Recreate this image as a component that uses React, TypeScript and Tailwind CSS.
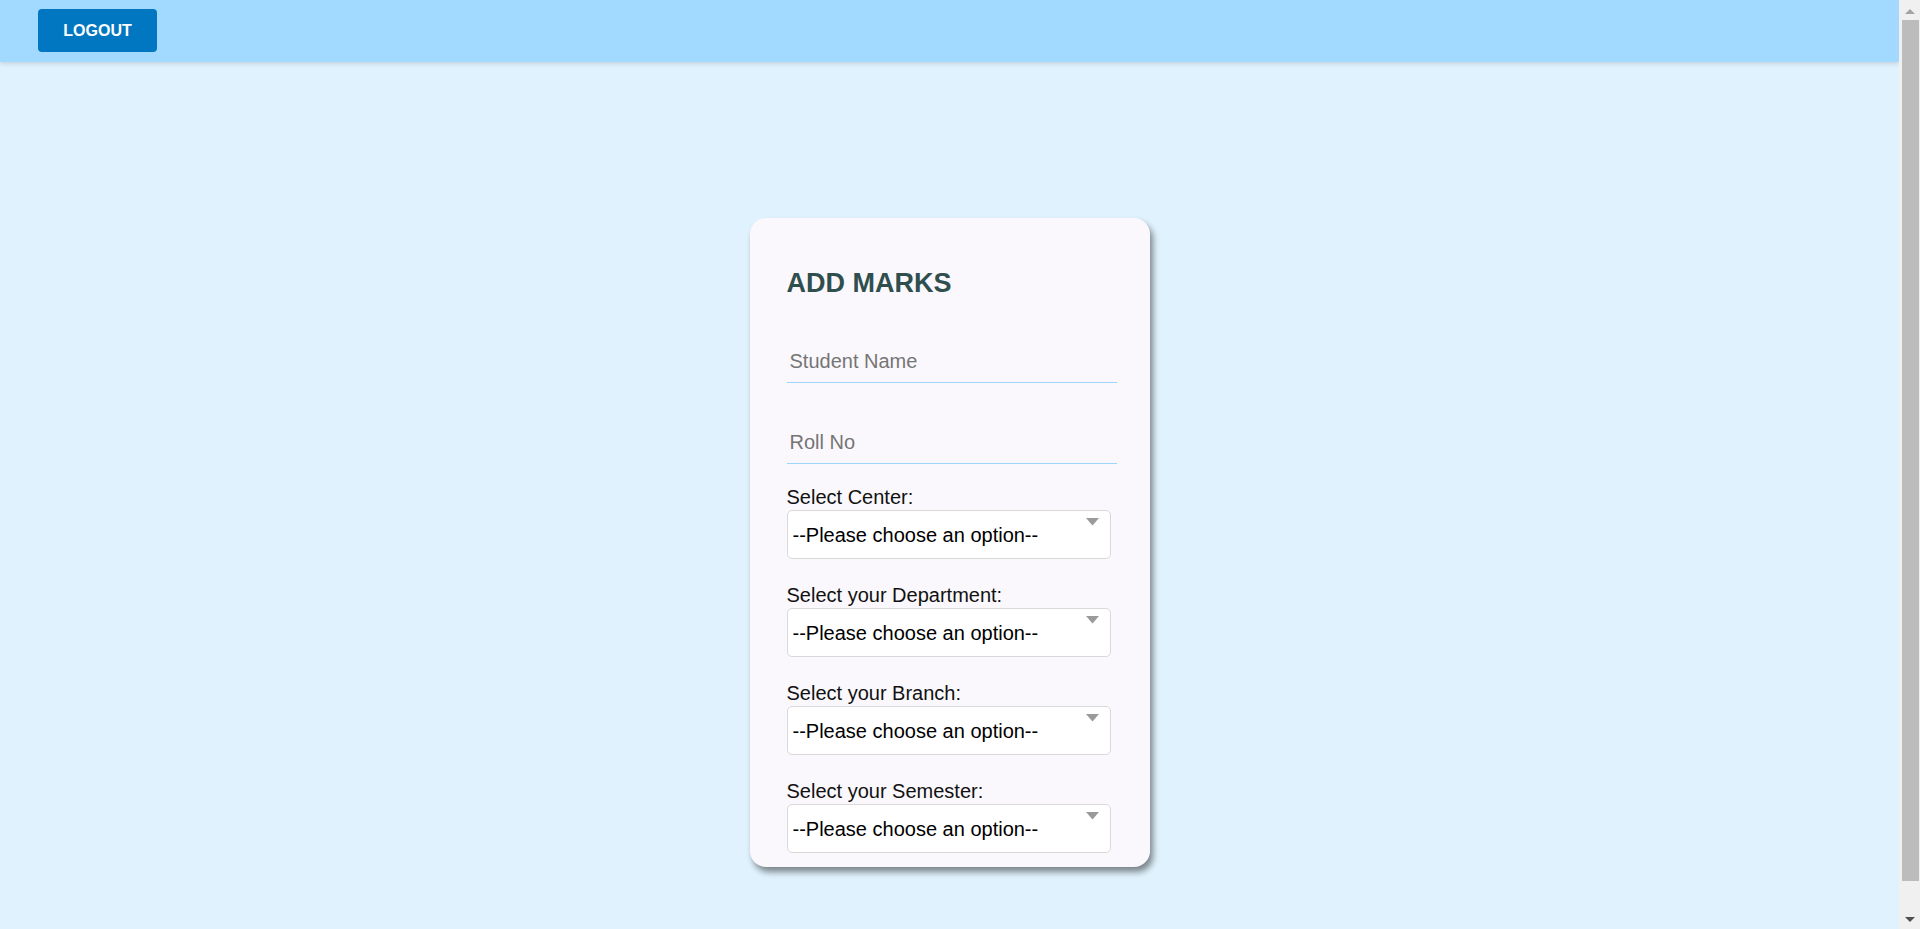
import React from "react";

const selects = [
  "Select Center:",
  "Select your Department:",
  "Select your Branch:",
  "Select your Semester:",
];

const SelectField: React.FC<{ label: string; first?: boolean }> = ({ label, first }) => (
  <div className={first ? "mt-[22px]" : "mt-[25px]"}>
    <label className="block text-[20px] leading-[23px] text-[#111]">{label}</label>
    <div className="relative mt-[1px] w-[324px]">
      <select className="h-[49px] w-full appearance-none rounded-[5px] border border-[#d9d9d9] bg-white pl-[5px] text-[20px] text-black outline-none">
        <option>--Please choose an option--</option>
      </select>
      <svg
        className="pointer-events-none absolute right-[12px] top-[8px]"
        width="13"
        height="8"
        viewBox="0 0 13 8"
      >
        <path d="M0 0h13L6.5 7.5z" fill="#9a9a9a" />
      </svg>
    </div>
  </div>
);

// classic windows-style scrollbar seen in the screenshot
const Scrollbar = () => (
  <div className="sticky top-0 flex h-screen w-[21px] shrink-0 flex-col items-center bg-[#f0f0f0]">
    <svg className="mt-[9px]" width="10" height="5" viewBox="0 0 10 5">
      <path d="M0 5L5 0l5 5z" fill="#a3a3a3" />
    </svg>
    <div className="ml-[1px] mt-[6px] w-[17px] flex-1 bg-[#bcbcbc]" />
    <svg className="mb-[7px] mt-[36px]" width="10" height="5" viewBox="0 0 10 5">
      <path d="M0 0h10L5 5z" fill="#505050" />
    </svg>
  </div>
);

export default function App() {
  return (
    <div className="flex bg-[#e0f2fd] font-['Liberation_Sans',Arial,sans-serif]">
      <div className="min-h-screen flex-1">
        <header className="h-[62px] bg-[#a2d9ff] pl-[38px] pt-[9px] shadow-[0_2px_4px_rgba(0,0,0,0.12)]">
          <button className="h-[43px] w-[119px] rounded-[4px] bg-[#0077c0] text-[16px] font-bold text-white">
            LOGOUT
          </button>
        </header>

        <main className="flex justify-center pb-[99px] pt-[156px]">
          <div className="w-[400px] rounded-[16px] bg-[#faf8fc] pb-[14px] pl-[37px] pr-[33px] pt-[50px] shadow-[3px_5px_6px_rgba(0,0,0,0.45)]">
            <h2 className="text-[27px] font-bold leading-[31px] text-[#2f4f4f]">ADD MARKS</h2>

            <input
              type="text"
              placeholder="Student Name"
              className="mt-[38px] block h-[46px] w-[330px] border-b border-[#9fd6f7] bg-transparent pl-[3px] pt-[4px] text-[20px] outline-none placeholder:text-[#757575]"
            />
            <input
              type="text"
              placeholder="Roll No"
              className="mt-[35px] block h-[46px] w-[330px] border-b border-[#9fd6f7] bg-transparent pl-[3px] pt-[4px] text-[20px] outline-none placeholder:text-[#757575]"
            />

            {selects.map((s, i) => (
              <SelectField key={s} label={s} first={i === 0} />
            ))}
          </div>
        </main>
      </div>
      <Scrollbar />
    </div>
  );
}
